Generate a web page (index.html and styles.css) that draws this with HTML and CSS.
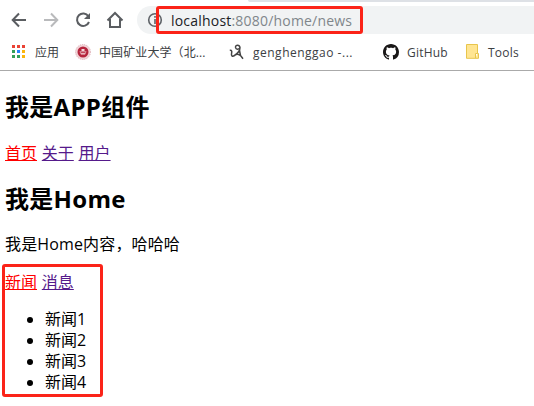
FILE: index.html
```html
<!DOCTYPE html>
<html lang="zh-CN">
<head>
<meta charset="utf-8">
<title>news</title>
<link rel="stylesheet" href="styles.css">
</head>
<body>
<header class="browser">
  <div class="tabstrip"></div>
  <div class="toolbar">
    <svg class="nav" viewBox="0 0 16 16"><path d="M15 8H2M8 1.5L1.7 8L8 14.5"/></svg>
    <svg class="nav disabled" viewBox="0 0 16 16"><path d="M1 8H14M8 1.5L14.3 8L8 14.5"/></svg>
    <svg class="nav" viewBox="0 0 16 16"><path d="M13.4 4.2A6.2 6.2 0 1 0 14 10"/><path class="fill" d="M15 1V7H9Z"/></svg>
    <svg class="nav home" viewBox="0 0 18 18"><path d="M1.5 9.5L9 2L16.500 9.500M4 8V16H14V8"/></svg>
    <div class="omnibox">
      <svg class="info" viewBox="0 0 16 16"><circle cx="8" cy="8" r="6.300"/><path d="M8 7V12M8 4V5.800"/></svg>
      <span class="url"><b>localhost</b>:8080/home/news</span>
      <div class="mark mark-url"></div>
    </div>
  </div>
  <nav class="bookmarks">
    <svg class="apps" viewBox="0 0 13 13"><path fill="#ea4335" d="M0 0h3v3H0zM5 0h3v3H5zM10 0h3v3h-3z"/><path fill="#34a058" d="M0 5h3v3H0zM0 10h3v3H0zM5 10h3v3H5z"/><path fill="#2684fc" d="M5 5h3v3H5z"/><path fill="#fbb50c" d="M10 5h3v3h-3zM10 10h3v3h-3z"/></svg>
    <span class="label label-apps">应用</span>
    <svg class="icon" viewBox="0 0 16 16"><circle cx="8" cy="8" r="7.500" fill="#f1d4d8" stroke="#d6a0a8" stroke-width=".8" stroke-dasharray="1 1"/><circle cx="8" cy="8" r="5.500" fill="#b5243c"/><path d="M4.500 7.500H11.500L10 10.500H6ZM6.500 5H9.500V7H6.500Z" fill="#f5d8dc"/><path d="M5.500 8.700H10.500" stroke="#b5243c"/></svg>
    <span class="label label-school">中国矿业大学（北...</span>
    <svg class="icon pen" viewBox="0 0 16 16"><path d="M.8 6.500C2.500 6 3.200 7 2.600 9C2 11.800 3.200 13 5.500 11.500C8.500 9.500 11 7 11 3.500C10.500 .3 6.300 .6 6.500 3.400C7 6 10 5.500 11 3.500M10.500 6.500L11.500 11.500L14 14.800M5.500 11.500C7.500 9.800 10 9.800 12 12"/></svg>
    <span class="label label-blog">genghenggao -...</span>
    <svg class="icon" viewBox="0 0 16 16"><path fill="#191717" d="M8 0C3.580 0 0 3.580 0 8c0 3.540 2.290 6.530 5.470 7.590.4.070.55-.17.55-.38 0-.19-.01-.82-.01-1.490-2.010.37-2.530-.49-2.690-.94-.09-.23-.48-.94-.82-1.130-.28-.15-.68-.52-.01-.53.63-.01 1.080.58 1.230.82.72 1.210 1.870.87 2.330.66.07-.52.28-.87.51-1.070-1.780-.2-3.640-.89-3.640-3.950 0-.87.31-1.590.82-2.150-.08-.2-.36-1.020.08-2.120 0 0 .67-.21 2.200.82.640-.18 1.320-.27 2-.27s1.360.09 2 .27c1.530-1.040 2.200-.82 2.200-.82.440 1.100.160 1.920.080 2.120.510.560.820 1.270.820 2.150 0 3.070-1.870 3.750-3.650 3.950.290.250.540.730.540 1.480 0 1.070-.01 1.930-.01 2.200 0 .21.15.46.55.38A8 8 0 0 0 16 8c0-4.420-3.580-8-8-8z"/></svg>
    <span class="label label-git">GitHub</span>
    <svg class="folder" viewBox="0 0 13 15"><path d="M.5.5H11.500V9.500H12.500V14.300H.5ZM11.500 9.500H9.500V14" fill="#ffe591" stroke="#e8c54c"/></svg>
    <span class="label label-tools">Tools</span>
  </nav>
</header>
<main>
  <h2 class="title-app">我是APP组件</h2>
  <div class="links links-app"><a class="active">首页</a> <a>关于</a> <a>用户</a></div>
  <h2 class="title-home">我是Home</h2>
  <p>我是Home内容，哈哈哈</p>
  <section class="news">
    <div class="links"><a class="active">新闻</a> <a>消息</a></div>
    <ul><li>新闻1</li><li>新闻2</li><li>新闻3</li><li>新闻4</li></ul>
    <div class="mark mark-news"></div>
  </section>
</main>
</body>
</html>
```
FILE: styles.css
```css
* { box-sizing: border-box; }
body {
  margin: 0;
  background: #fff;
  color: #000;
  font: 16px/21px "Open Sans", "Noto Sans CJK SC", sans-serif;
  overflow: hidden;
  height: 406px;
}
.browser { height: 71px; border-bottom: 1px solid #aaa; }
.tabstrip { height: 2px; margin-left: 248px; background: #dee1e6; border-bottom-left-radius: 2px; }
.toolbar { display: flex; align-items: center; height: 36px; padding-left: 11px; }
.nav { width: 16px; height: 16px; margin-right: 16px; fill: none; stroke: #5a5d61; stroke-width: 2; flex: none; }
.nav .fill { fill: #5a5d61; stroke: none; }
.nav.disabled { stroke: #b9babc; }
.nav.home { width: 18px; height: 18px; margin: 0 13px 0 -1px; }
.omnibox {
  position: relative;
  flex: 1;
  display: flex;
  align-items: center;
  height: 28px;
  padding-left: 10px;
  background: #f1f3f4;
  border-radius: 14px 0 0 14px;
}
.info { width: 16px; height: 16px; fill: none; stroke: #5f6368; stroke-width: 1.6; }
.url { margin-left: 8px; font-size: 14px; letter-spacing: .2px; color: #80868b; white-space: nowrap; }
.url b { font-weight: 400; color: #202124; }
.mark { position: absolute; border: 3px solid #fb2318; border-radius: 3px; }
.mark-url { left: 19px; top: 0; width: 207px; height: 28px; }
.bookmarks { display: flex; align-items: center; height: 32px; padding: 0 0 3px 12px; margin-top: -1px; }
.bookmarks svg { flex: none; }
.apps { width: 13px; height: 13px; }
.icon { width: 16px; height: 16px; }
.pen { fill: none; stroke: #444; stroke-width: 1.5; }
.folder { width: 13px; height: 15px; }
.label { flex: none; padding-top: 2px; font-size: 12px; line-height: 18px; color: #3c4043; white-space: nowrap; }
.label-apps { margin-left: 10px; width: 40px; }
.label-school { margin-left: 8px; width: 130px; letter-spacing: .1px; }
.label-blog { margin-left: 8px; width: 130px; letter-spacing: .5px; }
.label-git { margin-left: 8px; width: 59px; letter-spacing: .2px; }
.label-tools { margin-left: 9px; letter-spacing: .2px; }
main { padding-left: 5px; }
h2 { margin: 0; font-size: 24px; line-height: 32px; font-weight: 700; letter-spacing: .3px; }
.title-app { padding-top: 20px; }
.links-app { margin-top: 20px; }
.title-home { margin-top: 19px; }
p { margin: 19px 0 17px; letter-spacing: .15px; }
.links { word-spacing: .6px; }
.links a { color: #551a8b; text-decoration: underline; }
.links a.active { color: #f00; }
.news { position: relative; }
.news ul { margin: 16px 0 0; padding-left: 40px; }
.mark-news { left: -3px; top: -8px; width: 101px; height: 133px; }
```
